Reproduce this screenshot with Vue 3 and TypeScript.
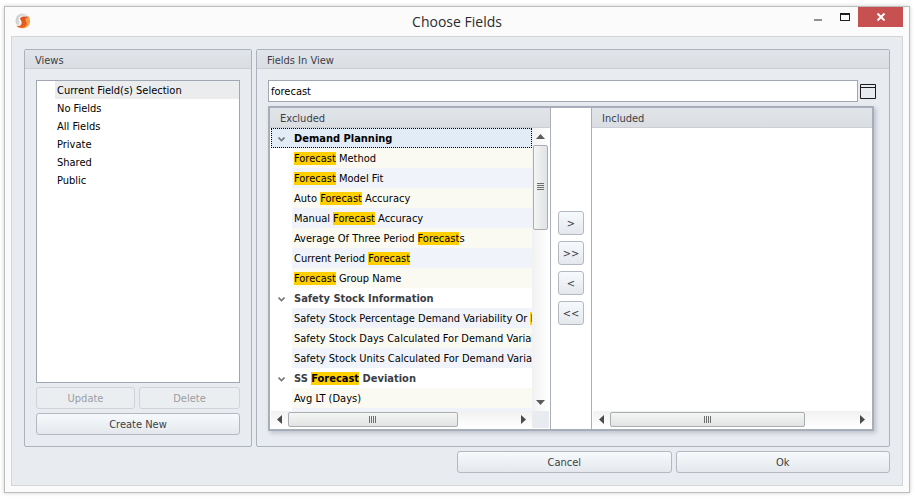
<script setup lang="ts">
import { computed, ref } from 'vue'

interface FieldGroup {
  name: string
  fields: string[]
}

interface Part {
  text: string
  hit: boolean
}

interface Row {
  key: string
  kind: 'group' | 'field'
  tone: string
  parts: Part[]
}

const views = ['Current Field(s) Selection', 'No Fields', 'All Fields', 'Private', 'Shared', 'Public']
const activeView = ref(views[0])
const query = ref('forecast')
const activeRow = ref('Demand Planning')

const groups: FieldGroup[] = [
  {
    name: 'Demand Planning',
    fields: [
      'Forecast Method',
      'Forecast Model Fit',
      'Auto Forecast Accuracy',
      'Manual Forecast Accuracy',
      'Average Of Three Period Forecasts',
      'Current Period Forecast',
      'Forecast Group Name',
    ],
  },
  {
    name: 'Safety Stock Information',
    fields: [
      'Safety Stock Percentage Demand Variability Or Forecast',
      'Safety Stock Days Calculated For Demand Variability',
      'Safety Stock Units Calculated For Demand Variability',
    ],
  },
  { name: 'SS Forecast Deviation', fields: ['Avg LT (Days)', ''] },
]

const moves = ['>', '>>', '<', '<<']

function split(text: string): Part[] {
  const needle = query.value.trim().toLowerCase()
  const at = needle ? text.toLowerCase().indexOf(needle) : -1
  if (at < 0) return [{ text, hit: false }]
  const end = at + needle.length
  return [
    { text: text.slice(0, at), hit: false },
    { text: text.slice(at, end), hit: true },
    { text: text.slice(end), hit: false },
  ].filter((p) => p.text !== '')
}

// Stripes alternate over fields only, so a group row does not reset them.
const rows = computed<Row[]>(() => {
  const out: Row[] = []
  let n = 0
  for (const g of groups) {
    out.push({ key: g.name, kind: 'group', tone: '', parts: split(g.name) })
    for (const f of g.fields) {
      out.push({ key: g.name + '/' + f, kind: 'field', tone: n % 2 ? 'cool' : 'warm', parts: split(f) })
      n++
    }
  }
  return out
})
</script>

<template>
  <div class="page">
    <main class="window">
      <header class="titlebar">
        <svg class="logo" viewBox="0 0 16 16" aria-hidden="true">
          <defs>
            <linearGradient id="orb" x1="0" y1="0" x2="1" y2="0.3">
              <stop offset="0" stop-color="#c4c6c8" />
              <stop offset="0.5" stop-color="#dcdddd" />
              <stop offset="1" stop-color="#efeae4" />
            </linearGradient>
            <linearGradient id="flame" x1="0" y1="0" x2="0" y2="1">
              <stop offset="0" stop-color="#dd4f1c" />
              <stop offset="1" stop-color="#ee6420" />
            </linearGradient>
          </defs>
          <path d="M0.600 7C1.200 3 4 0.600 7.500 0.600C11 0.600 13.500 2.500 14.500 5L5.500 6L4.500 9L6 11L3 13C1.200 11.500 0.300 9.500 0.600 7Z" fill="url(#orb)" />
          <path d="M10.500 4.500L13.500 3.500C15.500 6 15.800 9.500 13.800 12.200C12 14.800 9 15.700 6 15.200C9 14 10 12 10 9Z" fill="#f9a04e" />
          <path d="M13.500 3.800C10.500 3.400 6.500 3.300 5 5.300C5.300 7 6.800 8 6.600 10C6.400 12.400 4 13.500 1.400 12.700C4 16 10.500 15.700 11.700 11.500C12.300 9 10 7.600 10.500 6C11 4.700 12.300 4.500 13.500 3.800Z" fill="url(#flame)" />
          <path d="M5 5.300C4.600 7 6 8.200 5.800 10C5.500 12 3.800 12.900 1.400 12.700C3.500 12.300 4.700 11.300 4.700 9.900C4.700 8.200 3.300 7.200 3.700 5.500C4.300 3.400 8 2.600 12 3.400C9 3.200 6 3.500 5 5.300Z" fill="#f8f8f8" />
        </svg>
        <h1>Choose Fields</h1>
        <div class="captions">
          <button type="button" class="cap" aria-label="Minimize">
            <svg width="8" height="14" viewBox="0 0 8 14"><path d="M0 9h8v2H0z" fill="#919191" /></svg>
          </button>
          <button type="button" class="cap" aria-label="Maximize">
            <svg width="10" height="14" viewBox="0 0 10 14"><path d="M0 3h10v8H0zM1 5v5h8V5z" fill="#1e1e1e" fill-rule="evenodd" /></svg>
          </button>
          <button type="button" class="cap close" aria-label="Close">
            <svg width="8" height="8" viewBox="0 0 8 8"><path d="M0.500 0.500L7.500 7.500M7.500 0.500L0.500 7.500" stroke="#fff" stroke-width="2" /></svg>
          </button>
        </div>
      </header>

      <div class="client">
        <div class="columns">
          <section class="box views">
            <h2>Views</h2>
            <div class="box-body">
              <ul class="view-list">
                <li v-for="v in views" :key="v">
                  <button type="button" :class="{ active: v === activeView }" @click="activeView = v">{{ v }}</button>
                </li>
              </ul>
              <div class="pair">
                <button type="button" class="btn" disabled>Update</button>
                <button type="button" class="btn" disabled>Delete</button>
              </div>
              <button type="button" class="btn">Create New</button>
            </div>
          </section>

          <section class="box fields">
            <h2>Fields In View</h2>
            <div class="box-body">
              <div class="search">
                <input v-model="query" type="text" aria-label="Search fields" />
                <button type="button" class="pane-toggle" aria-label="Toggle pane">
                  <svg width="16" height="15" viewBox="0 0 16 15"><path d="M0.500 0.500h15v14h-15zM0.500 3.500h15" fill="none" stroke="#1b1b1b" /></svg>
                </button>
              </div>

              <div class="transfer">
                <section class="panel excluded">
                  <h3>Excluded</h3>
                  <div class="viewport">
                    <div
                      v-for="r in rows"
                      :key="r.key"
                      :class="['row', r.kind, r.tone, { current: r.key === activeRow }]"
                      @click="activeRow = r.key"
                    >
                      <svg v-if="r.kind === 'group'" class="chevron" width="7" height="5" viewBox="0 0 7 5"><path d="M0.500 0.500L3.500 3.500L6.500 0.500" fill="none" stroke="#74777d" stroke-width="1.600" /></svg>
                      <span class="label"><template v-for="(p, i) in r.parts" :key="i"><mark v-if="p.hit">{{ p.text }}</mark><template v-else>{{ p.text }}</template></template></span>
                    </div>
                  </div>
                  <div class="vbar">
                    <svg width="9" height="5" viewBox="0 0 9 5"><path d="M4.500 0L9 5H0z" fill="#5c5c5c" /></svg>
                    <div class="vtrack"><div class="thumb vthumb"><svg width="7" height="8" viewBox="0 0 7 8"><path d="M0 0.500h7M0 2.500h7M0 4.500h7M0 6.500h7" stroke="#6c6e70" /></svg></div></div>
                    <svg width="9" height="5" viewBox="0 0 9 5"><path d="M0 0H9L4.500 5z" fill="#5c5c5c" /></svg>
                  </div>
                  <div class="hbar">
                    <svg width="5" height="9" viewBox="0 0 5 9"><path d="M5 0V9L0 4.500z" fill="#4b4b4b" /></svg>
                    <div class="htrack"><div class="thumb hthumb"><svg width="8" height="7" viewBox="0 0 8 7"><path d="M0.500 0v7M2.500 0v7M4.500 0v7M6.500 0v7" stroke="#6c6e70" /></svg></div></div>
                    <svg width="5" height="9" viewBox="0 0 5 9"><path d="M0 0V9L5 4.500z" fill="#4b4b4b" /></svg>
                  </div>
                  <div class="corner"></div>
                </section>

                <div class="moves">
                  <button v-for="m in moves" :key="m" type="button" class="btn move">{{ m }}</button>
                </div>

                <section class="panel included">
                  <h3>Included</h3>
                  <div class="viewport"></div>
                  <div class="hbar">
                    <svg width="5" height="9" viewBox="0 0 5 9"><path d="M5 0V9L0 4.500z" fill="#4b4b4b" /></svg>
                    <div class="htrack"><div class="thumb hthumb wide"><svg width="8" height="7" viewBox="0 0 8 7"><path d="M0.500 0v7M2.500 0v7M4.500 0v7M6.500 0v7" stroke="#6c6e70" /></svg></div></div>
                    <svg width="5" height="9" viewBox="0 0 5 9"><path d="M0 0V9L5 4.500z" fill="#4b4b4b" /></svg>
                  </div>
                </section>
              </div>
            </div>
          </section>
        </div>

        <footer class="actions">
          <button type="button" class="btn">Cancel</button>
          <button type="button" class="btn">Ok</button>
        </footer>
      </div>
    </main>
  </div>
</template>

<style>
body {
  background: #fff;
}
</style>

<style scoped>
* {
  box-sizing: border-box;
}
.page {
  display: flex;
  min-height: 100vh;
  padding: 6px 5px 9px 4px;
  font-family: Tahoma, 'DejaVu Sans Condensed', 'DejaVu Sans', sans-serif;
  font-size: 11px;
  line-height: 14px;
  color: #3b3e45;
}
button,
input {
  font: inherit;
  color: inherit;
}
button {
  padding: 0;
  border: 0;
  background: none;
}
svg {
  display: block;
  flex: none;
}
.window {
  flex: 1;
  min-width: 0;
  display: flex;
  flex-direction: column;
  padding: 0 6px 6px;
  border: 1px solid #bcbdbd;
  background: #fbfbfb;
  box-shadow: 0 0 4px rgba(0, 0, 0, 0.2);
}
.titlebar {
  display: grid;
  grid-template-columns: 1fr auto 1fr;
  align-items: start;
  height: 29px;
}
.logo {
  width: 16px;
  height: 16px;
  margin: 6px 0 0 4px;
}
h1 {
  margin: 5px 0 0;
  font: 400 14px/20px 'Open Sans', 'Noto Sans', sans-serif;
  color: #2b2b2b;
}
.captions {
  display: flex;
  justify-content: flex-end;
}
.cap {
  display: flex;
  justify-content: center;
  align-items: center;
  width: 27px;
  height: 20px;
}
.cap.close {
  width: 45px;
  background: #c75050;
}
.client {
  flex: 1;
  display: flex;
  flex-direction: column;
  gap: 4px;
  padding: 12px;
  border: 1px solid #d3d5d7;
  background: #e8ebf0;
}
.columns {
  flex: 1;
  display: grid;
  grid-template-columns: minmax(0, 228fr) minmax(0, 634fr);
  gap: 4px;
}
.box {
  display: flex;
  flex-direction: column;
  border: 1px solid #adb2ba;
  border-radius: 2px;
}
h2,
h3 {
  margin: 0;
  font-size: 11px;
  font-weight: 400;
  line-height: 17px;
  background: linear-gradient(#e1e5e9, #dadee2);
  border-bottom: 1px solid #cbcfd4;
}
h2 {
  height: 19px;
  padding: 2px 10px 0;
}
.box-body {
  flex: 1;
  display: flex;
  flex-direction: column;
  gap: 4px;
  padding: 11px;
}
.view-list {
  flex: 1;
  margin: 0;
  padding: 0;
  list-style: none;
  border: 1px solid #a0a7b3;
  background: #fff;
}
.view-list li {
  padding-left: 18px;
}
.view-list button {
  display: block;
  width: 100%;
  height: 18px;
  padding: 2px 2px 0;
  text-align: left;
  color: #000;
}
.view-list .active {
  background: #ebecee;
}
.pair {
  display: grid;
  grid-template-columns: 99fr 101fr;
  gap: 4px;
}
.btn {
  height: 22px;
  padding-top: 1px;
  border: 1px solid #b4b9c1;
  border-radius: 3px;
  background: linear-gradient(#f7fafd, #e4e8ec);
}
.btn:disabled {
  border-color: #d0d3d7;
  background: #ebeef1;
  color: #9b9da1;
}
.fields .box-body {
  padding: 11px 15px 15px 11px;
}
.search {
  display: flex;
  align-items: center;
  gap: 2px;
  margin-right: -2px;
}
.search input {
  flex: 1;
  min-width: 0;
  height: 22px;
  padding: 0 2px;
  border: 1px solid #a0a7b3;
  background: #fff;
  color: #000;
  outline: none;
}
.transfer {
  flex: 1;
  display: grid;
  grid-template-columns: minmax(0, 281fr) 40px minmax(0, 281fr);
  border: 2px solid #a7aeb9;
  background: #fff;
  box-shadow: 2px 2px 4px rgba(90, 100, 115, 0.3);
}
.panel {
  display: grid;
  grid-template: 20px minmax(0, 1fr) 17px / minmax(0, 1fr) 17px;
  min-height: 0;
  padding: 0 1px 1px;
  background: #fff;
  border: 0 solid #a9afb9;
}
.excluded {
  border-right-width: 1px;
}
.included {
  grid-template-columns: minmax(0, 1fr);
  border-left-width: 1px;
}
h3 {
  grid-column: 1 / -1;
  margin: 0 -1px;
  padding: 2px 10px 0;
}
.viewport {
  height: 0;
  min-height: 100%;
  overflow: hidden;
}
.row {
  height: 20px;
  margin-left: 21px;
  padding: 4px 2px 0;
  white-space: nowrap;
  color: #000;
}
.warm {
  background: #fbfaf2;
}
.cool {
  background: #f0f4fa;
}
.group {
  display: flex;
  align-items: center;
  gap: 9px;
  margin: 0;
  padding: 2px 7px 0;
  font-weight: 700;
  color: #3b3e45;
}
.group mark {
  color: #000;
}
.current {
  padding: 2px 6px 0;
  border: 1px dotted #000;
  background: #e1ecf6;
  color: #000;
}
mark {
  background: #ffcf00;
  color: inherit;
}
.vbar,
.hbar {
  display: flex;
  align-items: center;
}
.vbar {
  flex-direction: column;
  gap: 6px;
  padding: 6px 0;
  background: linear-gradient(90deg, #f1f1f1, #fff);
}
.hbar {
  gap: 6px;
  padding: 0 6px;
  background: linear-gradient(#f1f1f1, #fff);
}
.vtrack {
  flex: 1;
  width: 15px;
}
.htrack {
  flex: 1;
  height: 15px;
}
.thumb {
  display: flex;
  justify-content: center;
  align-items: center;
  border: 1px solid #a9acb1;
  border-radius: 2px;
}
.vthumb {
  height: 34%;
  background: linear-gradient(90deg, #f4f5f5, #dfe2e3);
}
.hthumb {
  width: 75%;
  height: 15px;
  background: linear-gradient(#f4f5f5, #e2e4e4);
}
.hthumb.wide {
  width: 80%;
}
.corner {
  background: #e8ebf0;
}
.moves {
  display: flex;
  flex-direction: column;
  align-items: center;
  gap: 6px;
  padding-top: 103px;
}
.move {
  width: 26px;
  height: 24px;
}
.actions {
  display: grid;
  grid-template-columns: 1fr 1fr;
  gap: 4px;
  width: 50%;
  margin-left: auto;
}
</style>
